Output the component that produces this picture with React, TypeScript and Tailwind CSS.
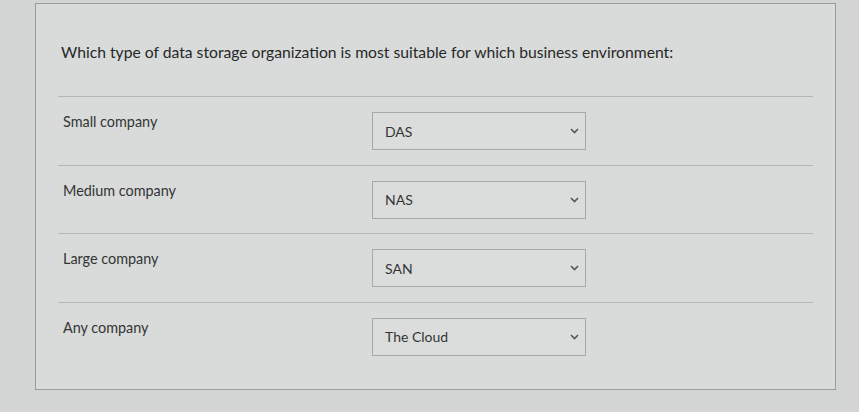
const rows = [
  { label: "Small company", value: "DAS" },
  { label: "Medium company", value: "NAS" },
  { label: "Large company", value: "SAN" },
  { label: "Any company", value: "The Cloud" },
];

function Chevron() {
  return (
    <svg width="9" height="6" viewBox="0 0 9 6" className="text-[#555]">
      <path d="M1 1l3.5 3.5L8 1" fill="none" stroke="currentColor" strokeWidth="1.6" />
    </svg>
  );
}

export default function App() {
  return (
    <div className="h-[412px] w-[859px] overflow-hidden bg-[#d3d5d4] pl-[35px] pt-[3px] font-['Lato','Liberation_Sans',sans-serif]">
      <div className="h-[387px] w-[801px] border border-[#9a9c9c] bg-[#d9dbda]">
        <p className="pl-[25px] pt-[38px] text-[15.7px] leading-5 text-[#262828]">
          Which type of data storage organization is most suitable for which business environment:
        </p>
        <div className="mx-[22px] mt-[34px]">
          {rows.map((r) => (
            <div key={r.label} className="flex h-[68.5px] border-t border-[#b4b6b5] pt-[15px]">
              <div className="w-[314px] pl-[5px] pt-[2px] text-[14.4px] leading-4 text-[#333535]">{r.label}</div>
              <div className="flex h-[38px] w-[214px] items-center justify-between border border-[#a6a8a8] bg-[#dbdddc] pl-[12px] pr-[6px] text-[14px] text-[#333535]">
                <span>{r.value}</span>
                <Chevron />
              </div>
            </div>
          ))}
        </div>
      </div>
    </div>
  );
}
